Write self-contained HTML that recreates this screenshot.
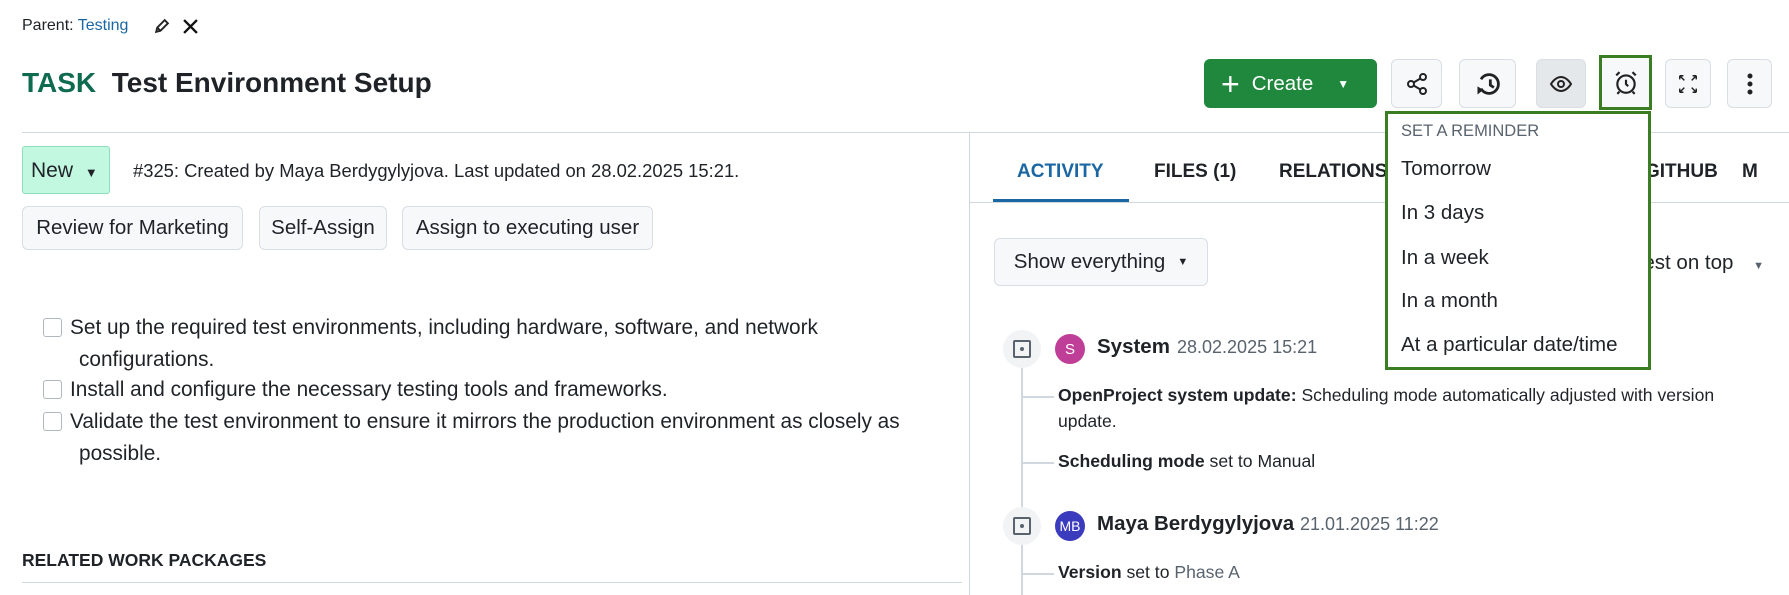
<!DOCTYPE html>
<html><head><meta charset="utf-8"><style>
*{box-sizing:border-box;margin:0;padding:0}
body{width:1789px;height:595px;overflow:hidden;background:#fff;font-family:"Liberation Sans",sans-serif;color:#1f2328;position:relative}
.a{position:absolute;white-space:nowrap}
.btn{position:absolute;background:#f6f8fa;border:1px solid #d8dee4;border-radius:6px;font-size:20.5px;display:flex;align-items:center;justify-content:center}
.ib{position:absolute;background:#f6f8fa;border:1px solid #d8dee4;border-radius:6px;top:59px;height:49px;display:flex;align-items:center;justify-content:center}
.cb{position:absolute;left:43px;width:19px;height:19px;border:1px solid #b0b7bf;border-radius:3px;background:#fff}
.ck{font-size:20.8px}
.tab{font-size:19px;font-weight:bold;top:161px}
.dd{font-size:20.5px;left:1401px}
.node{position:absolute;width:38px;height:38px;border-radius:50%;background:#f1f3f5;display:flex;align-items:center;justify-content:center}
.node i{display:block;width:18px;height:18px;border:2px solid #59636e;border-radius:2px;position:relative}
.node i:after{content:"";position:absolute;left:5px;top:5px;width:4px;height:4px;border-radius:50%;background:#59636e}
.av{position:absolute;width:30px;height:30px;border-radius:50%;color:#fff;font-size:15px;display:flex;align-items:center;justify-content:center}
.dash{position:absolute;left:1022px;width:32px;height:2px;background:#d0d7de}
.ln{font-size:17.6px;left:1058px}
</style></head><body>
<div class="a" style="left:22px;top:17px;font-size:16px">Parent: <span style="color:#1a67a3">Testing</span></div>
<svg class="a" style="left:153px;top:18px" width="17" height="17" viewBox="0 0 16 16"><path d="M3 13l1-4 7-7 3 3-7 7z M4 9l3 3" fill="none" stroke="#222" stroke-width="1.8"/></svg>
<svg class="a" style="left:183px;top:19px" width="15" height="15" viewBox="0 0 14 14"><path d="M1 1L13 13M13 1L1 13" stroke="#111" stroke-width="2.2"/></svg>
<div class="a" style="left:22px;top:67px;font-size:28px;font-weight:bold"><span style="color:#0e6b4f">TASK</span>&nbsp; Test Environment Setup</div>
<div class="a" style="left:22px;top:132px;width:1767px;height:1px;background:#d0d7de"></div>
<div class="a" style="left:969px;top:133px;width:1px;height:462px;background:#d0d7de"></div>

<div class="a" style="left:22px;top:146px;width:88px;height:48px;background:#c2f7e0;border:1px solid #8ee0bd;border-radius:3px;font-size:21px;padding:12px 0 0 8px">New <span style="font-size:13px;margin-left:6px">▼</span></div>
<div class="a" style="left:133px;top:160px;font-size:18.4px">#325: Created by Maya Berdygylyjova. Last updated on 28.02.2025 15:21.</div>
<div class="btn" style="left:22px;top:206px;width:221px;height:44px">Review for Marketing</div>
<div class="btn" style="left:259px;top:206px;width:128px;height:44px">Self-Assign</div>
<div class="btn" style="left:402px;top:206px;width:251px;height:44px">Assign to executing user</div>

<div class="cb" style="top:318px"></div><div class="a ck" style="left:70px;top:316px">Set up the required test environments, including hardware, software, and network</div>
<div class="a ck" style="left:79px;top:348px">configurations.</div>
<div class="cb" style="top:380px"></div><div class="a ck" style="left:70px;top:378px">Install and configure the necessary testing tools and frameworks.</div>
<div class="cb" style="top:412px"></div><div class="a ck" style="left:70px;top:410px">Validate the test environment to ensure it mirrors the production environment as closely as</div>
<div class="a ck" style="left:79px;top:442px">possible.</div>
<div class="a" style="left:22px;top:550px;font-size:17.5px;font-weight:bold">RELATED WORK PACKAGES</div>
<div class="a" style="left:22px;top:582px;width:940px;height:1px;background:#d0d7de"></div>

<!-- toolbar -->
<div class="a" style="left:1204px;top:59px;width:173px;height:49px;background:#1f883d;border-radius:6px;color:#fff;font-size:20.5px;display:flex;align-items:center;padding-left:17px"><span style="font-size:32px;font-weight:300;margin-right:12px;line-height:1">+</span>Create<span style="font-size:12px;margin-left:24px">▼</span></div>
<div class="ib" style="left:1391px;width:51px"><svg width="24" height="24" viewBox="0 0 24 24" fill="none" stroke="#222" stroke-width="2"><circle cx="18" cy="5" r="3"/><circle cx="6" cy="12" r="3"/><circle cx="18" cy="19" r="3"/><path d="M8.6 13.5l6.8 4M15.4 6.5l-6.8 4"/></svg></div>
<div class="ib" style="left:1459px;width:57px"><svg width="28" height="28" viewBox="0 0 24 24" fill="none" stroke="#222" stroke-width="2.4"><path d="M6 8a8 8 0 1 1 0 8"/><path d="M3 14l5 3-5 4z" fill="#222" stroke="none"/><path d="M14 8v5l3 2"/></svg></div>
<div class="ib" style="left:1536px;width:50px;background:#e5e8eb"><svg width="24" height="24" viewBox="0 0 24 24" fill="none" stroke="#222" stroke-width="2"><path d="M2 12s4-7 10-7 10 7 10 7-4 7-10 7S2 12 2 12z"/><circle cx="12" cy="12" r="3"/></svg></div>
<div class="ib" style="left:1599px;top:55px;height:55px;width:53px;border:3px solid #3a7d22;border-radius:0"><svg width="26" height="26" viewBox="0 0 24 24" fill="none" stroke="#222" stroke-width="2"><circle cx="12" cy="13" r="8"/><path d="M12 9v4l2 2M3 5l3-3M21 5l-3-3M6 20l-2 2M18 20l2 2"/></svg></div>
<div class="ib" style="left:1665px;width:46px"><svg width="22" height="22" viewBox="0 0 24 24" fill="none" stroke="#222" stroke-width="1.6"><path d="M3 3h4M3 3v4M3 3l5 5M21 3h-4M21 3v4M21 3l-5 5M3 21h4M3 21v-4M3 21l5-5M21 21h-4M21 21v-4M21 21l-5-5"/></svg></div>
<div class="ib" style="left:1727px;width:45px"><svg width="6" height="22" viewBox="0 0 6 22"><circle cx="3" cy="3" r="2.5" fill="#222"/><circle cx="3" cy="11" r="2.5" fill="#222"/><circle cx="3" cy="19" r="2.5" fill="#222"/></svg></div>

<!-- tabs -->
<div class="a tab" style="left:1017px;color:#1a67a3">ACTIVITY</div>
<div class="a tab" style="left:1154px">FILES (1)</div>
<div class="a tab" style="left:1279px">RELATIONS</div>
<div class="a tab" style="left:1645px">GITHUB</div>
<div class="a tab" style="left:1742px">M</div>
<div class="a" style="left:969px;top:202px;width:820px;height:1px;background:#d0d7de"></div>
<div class="a" style="left:993px;top:199px;width:136px;height:3px;background:#1a67a3"></div>

<div class="btn" style="left:994px;top:238px;width:214px;height:48px;font-size:20.5px">Show everything <span style="font-size:11px;margin-left:12px">▼</span></div>
<div class="a" style="right:25px;top:251px;font-size:20.5px">Newest on top <span style="font-size:11px;color:#59636e;margin-left:14px">▼</span></div>

<!-- activity -->
<div class="a" style="left:1021px;top:368px;width:2px;height:227px;background:#d0d7de"></div>
<div class="node" style="left:1003px;top:330px"><i></i></div>
<div class="av" style="left:1055px;top:334px;background:#bf3f98">S</div>
<div class="a" style="left:1097px;top:335px;font-size:20.5px;font-weight:bold">System</div>
<div class="a" style="left:1177px;top:337px;font-size:18px;color:#59636e">28.02.2025 15:21</div>
<div class="dash" style="top:396px"></div>
<div class="a ln" style="top:385px"><b>OpenProject system update:</b> Scheduling mode automatically adjusted with version</div>
<div class="a ln" style="top:411px">update.</div>
<div class="dash" style="top:462px"></div>
<div class="a ln" style="top:451px"><b>Scheduling mode</b> set to Manual</div>
<div class="node" style="left:1003px;top:507px"><i></i></div>
<div class="av" style="left:1055px;top:511px;background:#3b3bbd;font-size:14px">MB</div>
<div class="a" style="left:1097px;top:512px;font-size:20.5px;font-weight:bold">Maya Berdygylyjova</div>
<div class="a" style="left:1300px;top:514px;font-size:18px;color:#59636e">21.01.2025 11:22</div>
<div class="dash" style="top:573px"></div>
<div class="a ln" style="top:562px"><b>Version</b> set to <span style="color:#59636e">Phase A</span></div>

<!-- dropdown -->
<div class="a" style="left:1385px;top:111px;width:266px;height:259px;background:#fff;border:3px solid #3a7d22"></div>
<div class="a" style="left:1401px;top:122px;font-size:16.5px;color:#59636e">SET A REMINDER</div>
<div class="a dd" style="top:157px">Tomorrow</div>
<div class="a dd" style="top:201px">In 3 days</div>
<div class="a dd" style="top:246px">In a week</div>
<div class="a dd" style="top:289px">In a month</div>
<div class="a dd" style="top:333px">At a particular date/time</div>
</body></html>
